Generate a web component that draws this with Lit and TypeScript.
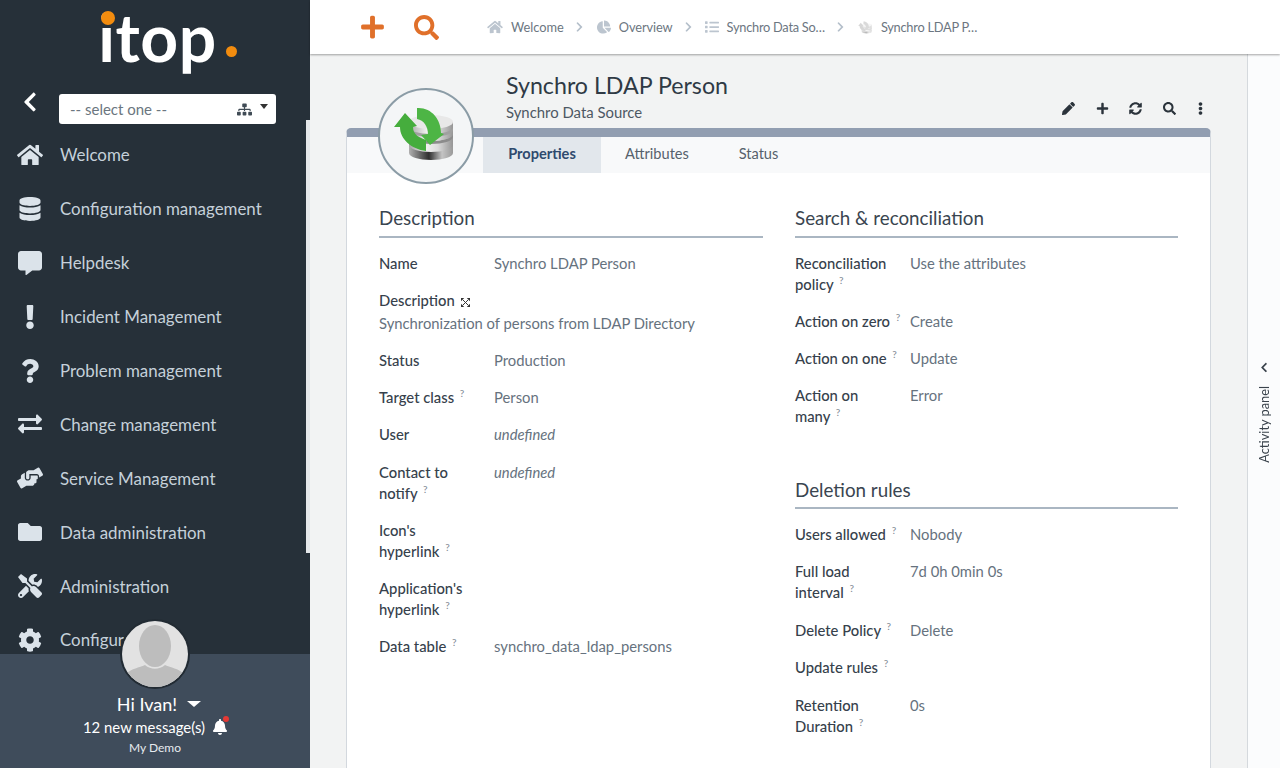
import { LitElement, html, css, svg } from "lit";
import { customElement } from "lit/decorators.js";

const P: Record<string, [string, string]> = {
  home: ["0 0 576 512", "M280.37 148.26L96 300.11V464a16 16 0 0 0 16 16l112.06-.29a16 16 0 0 0 15.92-16V368a16 16 0 0 1 16-16h64a16 16 0 0 1 16 16v95.64a16 16 0 0 0 16 16.05L464 480a16 16 0 0 0 16-16V300L295.67 148.26a12.19 12.19 0 0 0-15.3 0zM571.6 251.47L488 182.56V44.05a12 12 0 0 0-12-12h-56a12 12 0 0 0-12 12v72.61L318.47 43a48 48 0 0 0-61 0L4.34 251.47a12 12 0 0 0-1.6 16.9l25.5 31A12 12 0 0 0 45.15 301l235.22-193.74a12.19 12.19 0 0 1 15.3 0L530.9 301a12 12 0 0 0 16.9-1.6l25.5-31a12 12 0 0 0-1.7-16.93z"],
  database: ["0 0 448 512", "M448 73.143v45.714C448 159.143 347.667 192 224 192S0 159.143 0 118.857V73.143C0 32.857 100.333 0 224 0s224 32.857 224 73.143zM448 176v102.857C448 319.143 347.667 352 224 352S0 319.143 0 278.857V176c48.125 33.143 136.208 48.572 224 48.572S399.874 209.143 448 176zm0 160v102.857C448 479.143 347.667 512 224 512S0 479.143 0 438.857V336c48.125 33.143 136.208 48.572 224 48.572S399.874 369.143 448 336z"],
  comment: ["0 0 512 512", "M448 0H64C28.7 0 0 28.7 0 64v288c0 35.3 28.7 64 64 64h96v84c0 9.8 11.2 15.5 19.1 9.7L304 416h144c35.3 0 64-28.7 64-64V64c0-35.3-28.7-64-64-64z"],
  exclamation: ["0 0 192 512", "M176 432c0 44.112-35.888 80-80 80s-80-35.888-80-80 35.888-80 80-80 80 35.888 80 80zM25.26 25.199l13.6 272C39.499 309.972 50.041 320 62.83 320h66.34c12.789 0 23.331-10.028 23.97-22.801l13.6-272C167.425 11.49 156.496 0 142.77 0H49.23C35.504 0 24.575 11.49 25.26 25.199z"],
  question: ["0 0 384 512", "M202.021 0C122.202 0 70.503 32.703 29.914 91.026c-7.363 10.58-5.093 25.086 5.178 32.874l43.138 32.709c10.373 7.865 25.132 6.026 33.253-4.148 25.049-31.381 43.63-49.449 82.757-49.449 30.764 0 68.816 19.799 68.816 49.631 0 22.552-18.617 34.134-48.993 51.164-35.423 19.86-82.299 44.576-82.299 106.405V320c0 13.255 10.745 24 24 24h72.471c13.255 0 24-10.745 24-24v-5.773c0-42.86 125.268-44.645 125.268-160.627C377.504 66.256 286.902 0 202.021 0zM192 373.459c-38.196 0-69.271 31.075-69.271 69.271 0 38.195 31.075 69.27 69.271 69.27s69.271-31.075 69.271-69.271-31.075-69.27-69.271-69.27z"],
  exchange: ["0 0 512 512", "M0 168v-16c0-13.255 10.745-24 24-24h360V80c0-21.367 25.899-32.042 40.971-16.971l80 80c9.372 9.373 9.372 24.569 0 33.941l-80 80C409.956 271.982 384 261.456 384 240v-48H24c-13.255 0-24-10.745-24-24zm488 152H128v-48c0-21.314-25.862-32.08-40.971-16.971l-80 80c-9.372 9.373-9.372 24.569 0 33.941l80 80C102.057 463.997 128 453.437 128 432v-48h360c13.255 0 24-10.745 24-24v-16c0-13.255-10.745-24-24-24z"],
  hands: ["0 0 640 512", "M488 192H336v56c0 39.7-32.3 72-72 72s-72-32.3-72-72V126.4l-64.9 39C107.8 176.9 96 197.8 96 220.2v47.3l-80 46.2C.7 322.5-4.6 342.1 4.3 357.4l80 138.6c8.8 15.3 28.4 20.5 43.7 11.7L231.4 448H368c35.3 0 64-28.7 64-64h16c17.7 0 32-14.3 32-32v-64h8c13.3 0 24-10.7 24-24v-48c0-13.3-10.7-24-24-24zm147.7-37.4L555.7 16C546.9.7 527.3-4.5 512 4.3L408.6 64H306.4c-12 0-23.7 3.4-33.9 9.7L239 94.6c-9.4 5.8-15 16.1-15 27.1V248c0 22.1 17.9 40 40 40s40-17.9 40-40v-88h184c30.9 0 56 25.1 56 56v28.5l80-46.2c15.3-8.9 20.5-28.4 11.7-43.7z"],
  folder: ["0 0 512 512", "M464 128H272l-64-64H48C21.49 64 0 85.49 0 112v288c0 26.51 21.49 48 48 48h416c26.51 0 48-21.49 48-48V176c0-26.51-21.49-48-48-48z"],
  tools: ["0 0 512 512", "M501.1 395.7L384 278.6c-23.1-23.1-57.6-27.6-85.4-13.9L192 158.1V96L64 0 0 64l96 128h62.1l106.6 106.6c-13.6 27.8-9.2 62.3 13.9 85.4l117.1 117.1c14.6 14.6 38.2 14.6 52.7 0l52.7-52.7c14.5-14.6 14.5-38.2 0-52.7zM331.7 225c28.3 0 54.9 11 74.9 31l19.4 19.4c15.8-6.9 30.8-16.5 43.8-29.5 37.1-37.1 49.7-89.3 37.9-136.7-2.2-9-13.5-12.1-20.1-5.5l-74.4 74.4-67.9-11.3L334 98.9l74.4-74.4c6.6-6.6 3.4-17.9-5.7-20.2-47.4-11.7-99.6.9-136.6 37.9-28.5 28.5-41.9 66.1-41.2 103.6l82.1 82.1c8.1-1.9 16.5-2.9 24.7-2.9zm-103.9 82l-56.7-56.7L18.7 402.8c-25 25-25 65.5 0 90.5s65.5 25 90.5 0l123.6-123.6c-7.6-19.9-9.9-41.6-5-62.7zM64 472c-13.2 0-24-10.8-24-24 0-13.3 10.7-24 24-24s24 10.7 24 24c0 13.2-10.7 24-24 24z"],
  cog: ["0 0 512 512", "M487.4 315.7l-42.6-24.6c4.3-23.2 4.3-47 0-70.2l42.6-24.6c4.9-2.8 7.1-8.6 5.5-14-11.1-35.6-30-67.8-54.7-94.6-3.8-4.1-10-5.1-14.8-2.3L380.8 110c-17.9-15.4-38.5-27.3-60.8-35.1V25.8c0-5.6-3.9-10.5-9.4-11.7-36.7-8.2-74.3-7.8-109.2 0-5.5 1.2-9.4 6.1-9.4 11.7V75c-22.2 7.9-42.8 19.8-60.8 35.1L88.7 85.5c-4.9-2.8-11-1.9-14.8 2.3-24.7 26.7-43.6 58.9-54.7 94.6-1.7 5.4.6 11.2 5.5 14L67.3 221c-4.3 23.2-4.3 47 0 70.2l-42.6 24.6c-4.9 2.8-7.1 8.6-5.5 14 11.1 35.6 30 67.8 54.7 94.6 3.8 4.1 10 5.1 14.8 2.3l42.6-24.6c17.9 15.4 38.5 27.3 60.8 35.1v49.2c0 5.6 3.9 10.5 9.4 11.7 36.7 8.2 74.3 7.8 109.2 0 5.5-1.2 9.4-6.1 9.4-11.7v-49.2c22.2-7.9 42.8-19.8 60.8-35.1l42.6 24.6c4.9 2.8 11 1.9 14.8-2.3 24.7-26.7 43.6-58.9 54.7-94.6 1.5-5.5-.7-11.3-5.6-14.1zM256 336c-44.1 0-80-35.9-80-80s35.9-80 80-80 80 35.9 80 80-35.9 80-80 80z"],
  search: ["0 0 512 512", "M505 442.7L405.3 343c-4.5-4.5-10.6-7-17-7H372c27.6-35.3 44-79.7 44-128C416 93.1 322.9 0 208 0S0 93.1 0 208s93.1 208 208 208c48.3 0 92.7-16.4 128-44v16.3c0 6.4 2.5 12.5 7 17l99.7 99.7c9.4 9.4 24.6 9.4 33.9 0l28.3-28.3c9.4-9.4 9.4-24.6.1-34zM208 336c-70.7 0-128-57.2-128-128 0-70.7 57.2-128 128-128 70.7 0 128 57.2 128 128 0 70.7-57.2 128-128 128z"],
  plus: ["0 0 448 512", "M416 208H272V64c0-17.67-14.33-32-32-32h-32c-17.67 0-32 14.33-32 32v144H32c-17.67 0-32 14.33-32 32v32c0 17.67 14.33 32 32 32h144v144c0 17.67 14.33 32 32 32h32c17.67 0 32-14.33 32-32V304h144c17.67 0 32-14.33 32-32v-32c0-17.67-14.33-32-32-32z"],
  pencil: ["0 0 512 512", "M497.9 142.1l-46.1 46.1c-4.7 4.7-12.3 4.7-17 0l-111-111c-4.7-4.7-4.7-12.3 0-17l46.1-46.1c18.7-18.7 49.1-18.7 67.9 0l60.1 60.1c18.8 18.7 18.8 49.1 0 67.9zM284.2 99.8L21.6 362.4.4 483.9c-2.9 16.4 11.4 30.6 27.8 27.8l121.5-21.3 262.6-262.6c4.7-4.7 4.7-12.3 0-17l-111-111c-4.8-4.7-12.4-4.7-17.1 0z"],
  sync: ["0 0 512 512", "M370.72 133.28C339.458 104.008 298.888 87.962 255.848 88c-77.458.068-144.328 53.178-162.791 126.85-1.344 5.363-6.122 9.15-11.651 9.15H24.103c-7.498 0-13.194-6.807-11.807-14.176C33.933 94.924 134.813 8 256 8c66.448 0 126.791 26.136 171.315 68.685L463.03 40.97C478.149 25.851 504 36.559 504 57.941V192c0 13.255-10.745 24-24 24H345.941c-21.382 0-32.09-25.851-16.971-40.971l41.75-41.749zM32 296h134.059c21.382 0 32.09 25.851 16.971 40.971l-41.75 41.75c31.262 29.273 71.835 45.319 114.876 45.28 77.418-.07 144.315-53.144 162.787-126.849 1.344-5.363 6.122-9.15 11.651-9.15h57.304c7.498 0 13.194 6.807 11.807 14.176C478.067 417.076 377.187 504 256 504c-66.448 0-126.791-26.136-171.315-68.685L48.97 471.03C33.851 486.149 8 475.441 8 454.059V320c0-13.255 10.745-24 24-24z"],
  bell: ["0 0 448 512", "M224 512c35.32 0 63.97-28.65 63.97-64H160.03c0 35.35 28.65 64 63.97 64zm215.39-149.71c-19.32-20.76-55.47-51.99-55.47-154.29 0-77.7-54.48-139.9-127.94-155.16V32c0-17.67-14.32-32-31.98-32s-31.98 14.33-31.98 32v20.84C118.56 68.1 64.08 130.3 64.08 208c0 102.3-36.15 133.53-55.47 154.29-6 6.45-8.66 14.16-8.61 21.71.11 16.4 12.98 32 32.1 32h383.8c19.12 0 32-15.6 32.1-32 .05-7.55-2.61-15.27-8.61-21.71z"],
  ellipsis: ["0 0 192 512", "M96 184c39.8 0 72 32.2 72 72s-32.2 72-72 72-72-32.2-72-72 32.2-72 72-72zM24 80c0 39.8 32.2 72 72 72s72-32.2 72-72S135.8 8 96 8 24 40.2 24 80zm0 352c0 39.8 32.2 72 72 72s72-32.2 72-72-32.2-72-72-72-72 32.2-72 72z"],
  pie: ["0 0 544 512", "M527.79 288H290.5l158.03 158.03c6.04 6.04 15.98 6.53 22.19.68 38.7-36.46 65.32-85.61 73.13-140.86 1.34-9.46-6.51-17.85-16.06-17.85zm-15.83-64.8C503.72 103.74 408.26 8.28 288.8.04 279.68-.59 272 7.1 272 16.24V240h223.77c9.14 0 16.82-7.68 16.19-16.8zM224 288V50.71c0-9.55-8.39-17.4-17.84-16.06C86.99 51.49-4.1 155.6.14 280.37 4.5 408.51 114.83 513.59 243.03 511.98c50.4-.63 96.97-16.87 135.26-44.03 7.9-5.6 8.42-17.23 1.57-24.08L224 288z"],
  list: ["0 0 512 512", "M80 368H16a16 16 0 0 0-16 16v64a16 16 0 0 0 16 16h64a16 16 0 0 0 16-16v-64a16 16 0 0 0-16-16zm0-320H16A16 16 0 0 0 0 64v64a16 16 0 0 0 16 16h64a16 16 0 0 0 16-16V64a16 16 0 0 0-16-16zm0 160H16a16 16 0 0 0-16 16v64a16 16 0 0 0 16 16h64a16 16 0 0 0 16-16v-64a16 16 0 0 0-16-16zm416 176H176a16 16 0 0 0-16 16v32a16 16 0 0 0 16 16h320a16 16 0 0 0 16-16v-32a16 16 0 0 0-16-16zm0-320H176a16 16 0 0 0-16 16v32a16 16 0 0 0 16 16h320a16 16 0 0 0 16-16V80a16 16 0 0 0-16-16zm0 160H176a16 16 0 0 0-16 16v32a16 16 0 0 0 16 16h320a16 16 0 0 0 16-16v-32a16 16 0 0 0-16-16z"],
  sitemap: ["0 0 640 512", "M128 352H32c-17.67 0-32 14.33-32 32v96c0 17.67 14.33 32 32 32h96c17.67 0 32-14.33 32-32v-96c0-17.67-14.33-32-32-32zm-24-80h192v48h48v-48h192v48h48v-57.59c0-21.17-17.23-38.41-38.41-38.41H344v-64h40c17.67 0 32-14.33 32-32V32c0-17.67-14.33-32-32-32H256c-17.67 0-32 14.33-32 32v96c0 17.67 14.33 32 32 32h40v64H94.41C73.23 224 56 241.23 56 262.41V320h48v-48zm264 80h-96c-17.67 0-32 14.33-32 32v96c0 17.67 14.33 32 32 32h96c17.67 0 32-14.33 32-32v-96c0-17.67-14.33-32-32-32zm240 0h-96c-17.67 0-32 14.33-32 32v96c0 17.67 14.33 32 32 32h96c17.67 0 32-14.33 32-32v-96c0-17.67-14.33-32-32-32z"],
  chevron: ["0 0 320 512", "M34.52 239.03L228.87 44.69c9.37-9.37 24.57-9.37 33.94 0l22.67 22.67c9.36 9.36 9.37 24.52.04 33.9L131.49 256l154.02 154.75c9.34 9.38 9.32 24.54-.04 33.9l-22.67 22.67c-9.37 9.37-24.57 9.37-33.94 0L34.52 272.97c-9.37-9.37-9.37-24.57 0-33.94z"],
};

const ic = (name: string, cls = "") => {
  const [vb, d] = P[name];
  return html`<svg class="ic ${cls}" viewBox=${vb} aria-hidden="true"><path d=${d}></path></svg>`;
};

const menu: [string, string][] = [
  ["home", "Welcome"],
  ["database", "Configuration management"],
  ["comment", "Helpdesk"],
  ["exclamation", "Incident Management"],
  ["question", "Problem management"],
  ["exchange", "Change management"],
  ["hands", "Service Management"],
  ["folder", "Data administration"],
  ["tools", "Administration"],
  ["cog", "Configuration"],
];

type Row = { l: string; b?: string; v?: string; h?: boolean; u?: boolean; x?: boolean };
const left: Row[] = [
  { l: "Name", v: "Synchro LDAP Person" },
  { l: "Status", v: "Production" },
  { l: "Target class", v: "Person", h: true },
  { l: "User", v: "undefined", u: true },
  { l: "Contact to", b: "notify", v: "undefined", u: true, h: true },
  { l: "Icon's", b: "hyperlink", h: true },
  { l: "Application's", b: "hyperlink", h: true },
  { l: "Data table", v: "synchro_data_ldap_persons", h: true },
];
const right1: Row[] = [
  { l: "Reconciliation", b: "policy", v: "Use the attributes", h: true },
  { l: "Action on zero", v: "Create", h: true },
  { l: "Action on one", v: "Update", h: true },
  { l: "Action on", b: "many", v: "Error", h: true },
];
const right2: Row[] = [
  { l: "Users allowed", v: "Nobody", h: true },
  { l: "Full load", b: "interval", v: "7d 0h 0min 0s", h: true, x: true },
  { l: "Delete Policy", v: "Delete", h: true },
  { l: "Update rules", h: true },
  { l: "Retention", b: "Duration", v: "0s", h: true },
];

const dbIcon = (size: number, vb: string, cls: string, id: string) => html`<svg class=${cls} width=${size} height=${size} viewBox=${vb} aria-hidden="true">
  ${svg`
    <defs>
      <linearGradient id="${id}s" x1="0" x2="1" y1="0" y2="0">
        <stop offset="0" stop-color="#a6a6a6"></stop>
        <stop offset=".4" stop-color="#f0f0f0"></stop>
        <stop offset=".65" stop-color="#dcdcdc"></stop>
        <stop offset="1" stop-color="#969696"></stop>
      </linearGradient>
      <linearGradient id="${id}d" x1="0" x2="1" y1="0" y2="0">
        <stop offset="0" stop-color="#b0b0b0"></stop>
        <stop offset=".45" stop-color="#2f2f2f"></stop>
        <stop offset=".75" stop-color="#c4c4c4"></stop>
        <stop offset="1" stop-color="#9a9a9a"></stop>
      </linearGradient>
      <filter id="${id}b"><feGaussianBlur stdDeviation=".5"></feGaussianBlur></filter>
    </defs>
    <g filter="url(#${id}b)">
      <path d="M30 56v8c0 4 10 7 22 7s22-3 22-7v-8z" fill="url(#${id}d)"></path>
      <path d="M30 45v11c0 4 10 7 22 7s22-3 22-7V45z" fill="url(#${id}s)"></path>
      <path d="M30 45c0 4 10 7 22 7s22-3 22-7v3c0 4-10 7-22 7s-22-3-22-7z" fill="#8c8c8c"></path>
      <path d="M30 33v12c0 4 10 7 22 7s22-3 22-7V33z" fill="url(#${id}s)"></path>
      <path d="M30 38c0 4 10 7 22 7s22-3 22-7v3c0 4-10 7-22 7s-22-3-22-7z" fill="#a0a0a0"></path>
      <ellipse cx="52" cy="33" rx="22" ry="7" fill="#e8e8e8"></ellipse>
      <path d="M26 24L15 38H21C21 50 32 60 47 62V51C38 48 34 44 34 38L38 37z" fill="#45ad3c"></path>
      <path d="M38 19C52 18 62 30 62 44L65 45 51 56 42 46 49 45C49 38 45 31 38 30z" fill="#4db544"></path>
    </g>
  `}
</svg>`;

@customElement("app-root")
export class AppRoot extends LitElement {
  static styles = css`
    :host {
      display: grid;
      grid-template-columns: 310px 1fr;
      width: 1280px;
      height: 768px;
      overflow: hidden;
      font-family: "Lato", "Open Sans", sans-serif;
      font-size: 15px;
    }
    .ic { fill: currentColor; display: block; flex: none; }

    /* sidebar */
    .side {
      position: relative;
      background: #263039;
      display: flex;
      flex-direction: column;
      height: 768px;
      overflow: hidden;
    }
    .logo {
      height: 91px;
      display: flex;
      justify-content: center;
      position: relative;
      flex: none;
    }
    .logo-text {
      color: #fff;
      font-size: 66px;
      font-weight: 700;
      line-height: 74px;
      height: 90px;
      margin-left: 5px;
      letter-spacing: .5px;
    }
    .dot { position: absolute; background: #f28c0f; border-radius: 50%; }
    .dot.a { left: 101px; top: 11px; width: 14px; height: 14px; }
    .dot.b { left: 225.5px; top: 45.5px; width: 11px; height: 11px; }
    .toggle {
      height: 36px;
      display: flex;
      align-items: center;
      padding-left: 23px;
      flex: none;
      color: #fff;
    }
    .toggle .back { width: 14px; height: 22px; margin-top: -14px; }
    .select {
      margin-left: 22px;
      width: 217px;
      height: 30px;
      box-sizing: border-box;
      background: #fff;
      border-radius: 3px;
      display: flex;
      align-items: center;
      padding: 0 8px 0 11px;
      color: #6b7680;
      font-size: 15px;
    }
    .select span { flex: 1; }
    .select .map { width: 15px; height: 13px; color: #404b55; }
    .select .caret { width: 0; height: 0; border: 4px solid transparent; border-top: 5px solid #333; border-bottom: 0; margin: 0 0 0 8px; transform: translateY(-3px); }
    .menu { flex: 1; min-height: 0; overflow: hidden; padding-top: 1px; }
    .item {
      height: 53.9px;
      display: flex;
      align-items: center;
      color: #c5d0da;
      font-size: 16.9px;
      white-space: nowrap;
    }
    .item .slot { width: 60px; display: flex; justify-content: center; color: #dbe3ea; flex: none; }
    .item .ic { height: 24px; width: 26px; }
    .scroll { position: absolute; right: 0; top: 120px; width: 4px; height: 433px; background: #e4e7ea; }
    .foot {
      height: 114px;
      flex: none;
      background: #3f4c5b;
      color: #fff;
      text-align: center;
      box-sizing: border-box;
      padding-top: 38px;
    }
    .hi { font-size: 18px; line-height: 24px; display: flex; justify-content: center; align-items: center; gap: 10px; padding-left: 8px; }
    .hi i { width: 0; height: 0; border: 7px solid transparent; border-top: 6px solid #fff; border-bottom: 0; }
    .msg { font-size: 14.9px; line-height: 20px; margin-top: 1px; display: flex; justify-content: center; align-items: center; gap: 8px; }
    .bellwrap { position: relative; display: block; }
    .bellwrap .ic { width: 14px; height: 16px; }
    .bellwrap b { position: absolute; right: -2px; top: -3px; width: 6px; height: 6px; background: #e53935; border-radius: 50%; }
    .org { font-size: 12px; line-height: 16px; margin-top: 3px; color: #e6ebef; }
    .avatar { position: absolute; left: 120px; top: 619px; width: 70px; height: 70px; border-radius: 50%; box-sizing: border-box; border: 2px solid #222b33; overflow: hidden; }
    .avatar svg { display: block; width: 100%; height: 100%; }

    /* right part */
    .right { display: flex; flex-direction: column; min-width: 0; height: 768px; background: #f2f3f3; }
    .top {
      height: 54px;
      flex: none;
      background: #fff;
      box-shadow: 0 1px 2px rgba(0, 0, 0, .35);
      display: flex;
      align-items: center;
      padding-left: 51px;
      position: relative;
      z-index: 3;
    }
    .top .act { color: #e0702a; display: flex; align-items: center; margin-right: 30px; }
    .top .act.last { margin-right: 48px; }
    .top .plus { width: 23px; height: 26px; }
    .top .mag { width: 25px; height: 25px; }
    .crumbs { display: flex; align-items: center; color: #6c7681; font-size: 12.8px; }
    .crumbs .ic { color: #bcc5cf; }
    .crumb { display: flex; align-items: center; gap: 8px; white-space: nowrap; }
    .crumb.tight { letter-spacing: -.25px; }
    .crumb.nudge { margin-left: 1px; letter-spacing: -.1px; }
    .crumb.last { margin-left: 1px; letter-spacing: -.25px; }
    .crumb .ic { width: 14px; height: 14px; }
    .crumb .ic.wide { width: 16px; }
    .sep { width: 7px; height: 12px; margin: 0 13px 0 12px; transform: rotate(180deg); }
    .crumbs .sep { color: #b4bfca; }
    .faint { opacity: .35; filter: grayscale(1); }

    .body { flex: 1; min-height: 0; display: flex; }
    .main { flex: 1; min-width: 0; padding: 19px 36px 0 36px; position: relative; overflow: hidden; }
    .head { height: 55px; display: flex; padding-left: 160px; }
    .titles { flex: 1; }
    .title { font-size: 23.2px; line-height: 24px; color: #2f3a45; }
    .sub { font-size: 14.9px; line-height: 20px; margin-top: 5px; color: #4d5863; }
    .tools { display: flex; align-items: center; margin-top: 21px; height: 28px; color: #2b333b; padding-right: 4px; }
    .tools .ic { width: 13px; height: 13px; }
    .tools .cell { width: 33.4px; display: flex; justify-content: center; }
    .tools .cell.more { width: 14px; margin-left: 7.3px; }
    .tools .cell.more .ic { width: 5px; }

    .medal {
      position: absolute;
      left: 68px;
      top: 34px;
      width: 96px;
      height: 96px;
      border-radius: 50%;
      box-sizing: border-box;
      border: 2px solid #8b9ca6;
      background: #f4f6f7;
      z-index: 2;
    }
    .medal svg { display: block; }

    .card {
      background: #fff;
      border-top: 9px solid #929eb1;
      border-left: 1px solid #d3d8de;
      border-right: 1px solid #d3d8de;
      border-radius: 5px 5px 0 0;
      height: 700px;
    }
    .tabs { height: 36px; display: flex; background: #f8f9fa; padding-left: 136px; color: #56616c; }
    .tab { display: flex; align-items: center; justify-content: center; font-size: 14.6px; padding-bottom: 3px; box-sizing: border-box; }
    .tab.on { background: #e2e7ec; color: #2f4a6e; font-weight: 700; width: 118px; }
    .tab.s { width: 112px; }
    .tab.t { width: 91px; }

    .cols { display: grid; grid-template-columns: 384px 383px; column-gap: 32px; padding: 31px 0 0 32px; }
    h2 {
      margin: 0 0 15px;
      font-size: 18.8px;
      font-weight: 400;
      line-height: 28px;
      color: #3a4550;
      padding-bottom: 4px;
      border-bottom: 2px solid #aab6c2;
    }
    h2.second { margin-top: 48px; padding-bottom: 3px; }
    .row { display: grid; grid-template-columns: 115px 1fr; margin-bottom: 16px; line-height: 21.1px; font-size: 14.8px; }
    .row.extra { margin-bottom: 17.5px; }
    .row.stack { display: block; }
    .row.stack .lab { margin-bottom: 2px; }
    .lab { color: #36414c; white-space: nowrap; font-weight: 500; }
    .val { color: #66727e; }
    .val.u { font-style: italic; }
    .lab sup { font-size: 10px; color: #7f8a95; line-height: 0; margin-left: 2px; vertical-align: 6px; }
    .exp { display: inline-block; width: 9px; height: 9px; margin-left: 3px; color: #333; fill: currentColor; stroke: none; vertical-align: -1px; }
    .exp .x { fill: none; stroke: currentColor; stroke-width: 1.1; }

    .activity {
      width: 33px;
      flex: none;
      box-sizing: border-box;
      background: #fbfcfd;
      border-left: 1px solid #d5d9dd;
      display: flex;
      flex-direction: column;
      align-items: center;
      padding-top: 308px;
      color: #3a434c;
    }
    .activity .ic { width: 8px; height: 11px; }
    .activity span { writing-mode: vertical-rl; transform: rotate(180deg); font-size: 12.8px; margin-top: 13px; }
  `;

  private row(r: Row) {
    const help = r.h ? html` <sup>?</sup>` : "";
    return html`<div class="row ${r.x ? "extra" : ""}">
      <div class="lab">${r.b ? html`${r.l}<br />${r.b}${help}` : html`${r.l}${help}`}</div>
      <div class="val ${r.u ? "u" : ""}">${r.v ?? ""}</div>
    </div>`;
  }

  render() {
    return html`
      <aside class="side">
        <div class="logo">
          <span class="logo-text">itop</span>
          <span class="dot a"></span>
          <span class="dot b"></span>
        </div>
        <div class="toggle">
          ${ic("chevron", "back")}
          <div class="select"><span>-- select one --</span>${ic("sitemap", "map")}<i class="caret"></i></div>
        </div>
        <nav class="menu">
          ${menu.map(([i, t]) => html`<div class="item"><span class="slot">${ic(i)}</span>${t}</div>`)}
        </nav>
        <div class="scroll"></div>
        <footer class="foot">
          <div class="hi">Hi Ivan! <i></i></div>
          <div class="msg">12 new message(s) <span class="bellwrap">${ic("bell")}<b></b></span></div>
          <div class="org">My Demo</div>
        </footer>
        <div class="avatar">
          <svg viewBox="0 0 66 66" aria-hidden="true">
            <rect width="66" height="66" fill="#e2e2e2"></rect>
            <ellipse cx="33" cy="25" rx="16" ry="21" fill="#bdbdbd"></ellipse>
            <path d="M4 53c6-6 13-6 19-9 6 5 14 5 20 0 6 3 13 3 19 9v13H4z" fill="#bdbdbd"></path>
          </svg>
        </div>
      </aside>
      <section class="right">
        <header class="top">
          <span class="act">${ic("plus", "plus")}</span>
          <span class="act last">${ic("search", "mag")}</span>
          <div class="crumbs">
            <span class="crumb">${ic("home", "wide")}Welcome</span>
            ${ic("chevron", "sep")}
            <span class="crumb nudge">${ic("pie")}Overview</span>
            ${ic("chevron", "sep")}
            <span class="crumb tight">${ic("list")}Synchro Data So…</span>
            ${ic("chevron", "sep")}
            <span class="crumb last">${dbIcon(15, "14 15 66 60", "faint", "x")}Synchro LDAP P…</span>
          </div>
        </header>
        <div class="body">
          <main class="main">
            <div class="medal">${dbIcon(92, "1 1 92 92", "", "m")}</div>
            <div class="head">
              <div class="titles">
                <div class="title">Synchro LDAP Person</div>
                <div class="sub">Synchro Data Source</div>
              </div>
              <div class="tools">
                <span class="cell">${ic("pencil")}</span>
                <span class="cell">${ic("plus")}</span>
                <span class="cell">${ic("sync")}</span>
                <span class="cell">${ic("search")}</span>
                <span class="cell more">${ic("ellipsis")}</span>
              </div>
            </div>
            <div class="card">
              <div class="tabs">
                <div class="tab on">Properties</div>
                <div class="tab s">Attributes</div>
                <div class="tab t">Status</div>
              </div>
              <div class="cols">
                <div>
                  <h2>Description</h2>
                  ${this.row(left[0])}
                  <div class="row stack">
                    <div class="lab">Description
                      <svg class="exp" viewBox="0 0 10 10" aria-hidden="true">
                        <path d="M0 0h3.6L0 3.6zM10 0v3.6L6.4 0zM0 10V6.4L3.6 10zM10 10H6.4L10 6.4z"></path>
                        <path class="x" d="M2 2l6 6M8 2l-6 6"></path>
                      </svg>
                    </div>
                    <div class="val">Synchronization of persons from LDAP Directory</div>
                  </div>
                  ${left.slice(1).map((r) => this.row(r))}
                </div>
                <div>
                  <h2>Search &amp; reconciliation</h2>
                  ${right1.map((r) => this.row(r))}
                  <h2 class="second">Deletion rules</h2>
                  ${right2.map((r) => this.row(r))}
                </div>
              </div>
            </div>
          </main>
          <aside class="activity">
            ${ic("chevron")}
            <span>Activity panel</span>
          </aside>
        </div>
      </section>
    `;
  }
}
